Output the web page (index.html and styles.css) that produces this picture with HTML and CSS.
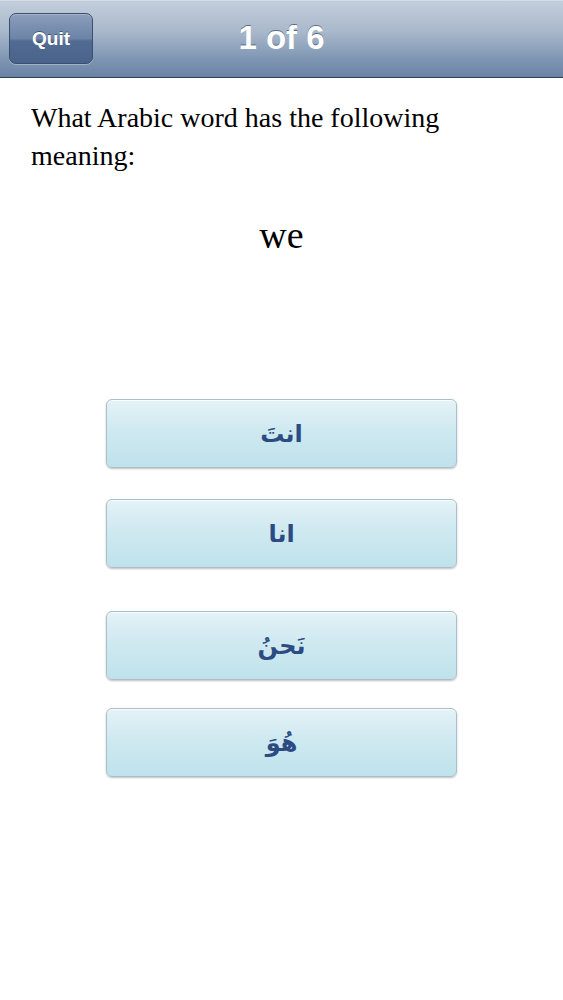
FILE: index.html
```html
<!DOCTYPE html>
<html>
<head>
<meta charset="utf-8">
<link rel="stylesheet" href="styles.css">
</head>
<body>
<header class="navbar">
  <button class="quit">Quit</button>
  <div class="title">1 of 6</div>
</header>
<main class="content">
  <p class="question">What Arabic word has the following meaning:</p>
  <div class="word">we</div>
  <div class="answers">
    <button class="answer a1" dir="rtl">انتَ</button>
    <button class="answer a2" dir="rtl">انا</button>
    <button class="answer a3" dir="rtl">نَحنُ</button>
    <button class="answer a4" dir="rtl">هُوَ</button>
  </div>
</main>
</body>
</html>
```
FILE: styles.css
```css
html, body {
  margin: 0;
  padding: 0;
  background: #ffffff;
}
body {
  width: 563px;
  height: 1000px;
  overflow: hidden;
}
.navbar {
  position: relative;
  height: 76px;
  background: linear-gradient(#c3cedc 0%, #a9b8cb 40%, #8097b4 75%, #6a83a4 100%);
  border-top: 1px solid #d3dbe6;
  border-bottom: 1px solid #2d3f5a;
  display: flex;
  align-items: center;
  justify-content: center;
  box-sizing: content-box;
}
.quit {
  position: absolute;
  left: 9px;
  top: 12px;
  width: 84px;
  height: 51px;
  border-radius: 7px;
  border: 1px solid #3a4e70;
  background: linear-gradient(#8a9dba 0%, #6d84a7 50%, #526b92 55%, #4a638b 100%);
  box-shadow: inset 0 1px 0 rgba(255,255,255,0.25), 0 1px 0 rgba(255,255,255,0.3);
  color: #ffffff;
  font-family: "Liberation Sans", Arial, sans-serif;
  font-weight: bold;
  font-size: 19px;
  text-shadow: 0 -1px 0 rgba(0,0,0,0.4);
  padding: 0;
}
.title {
  color: #ffffff;
  font-family: "Liberation Sans", Arial, sans-serif;
  font-weight: bold;
  font-size: 33px;
  text-shadow: 0 -1px 0 rgba(40,55,80,0.6);
  margin-top: -2px;
}
.content {
  padding: 0 31px;
}
.question {
  margin: 21px 0 0 0;
  font-family: "Liberation Serif", "Times New Roman", serif;
  font-size: 28px;
  line-height: 38px;
  color: #000;
}
.word {
  margin-top: 38px;
  text-align: center;
  font-family: "Liberation Serif", "Times New Roman", serif;
  font-size: 38px;
  line-height: 44px;
  color: #000;
}
.answers {
  margin-top: 142px;
  display: flex;
  flex-direction: column;
  align-items: flex-start;
  padding-left: 75px;
}
.answer {
  width: 351px;
  height: 69px;
  border-radius: 6px;
  border: 1px solid #a9c0c8;
  background: linear-gradient(#e4f3f7 0%, #cfe9f0 45%, #bfe2ec 100%);
  box-shadow: 0 1px 2px rgba(0,0,0,0.25), inset 0 1px 0 rgba(255,255,255,0.8);
  color: #2b4b82;
  font-family: "DejaVu Sans", sans-serif;
  font-weight: bold;
  font-size: 24px;
  padding: 0;
  margin: 0;
}
.a2 { margin-top: 31px; }
.a3 { margin-top: 43px; }
.a4 { margin-top: 28px; }
```
